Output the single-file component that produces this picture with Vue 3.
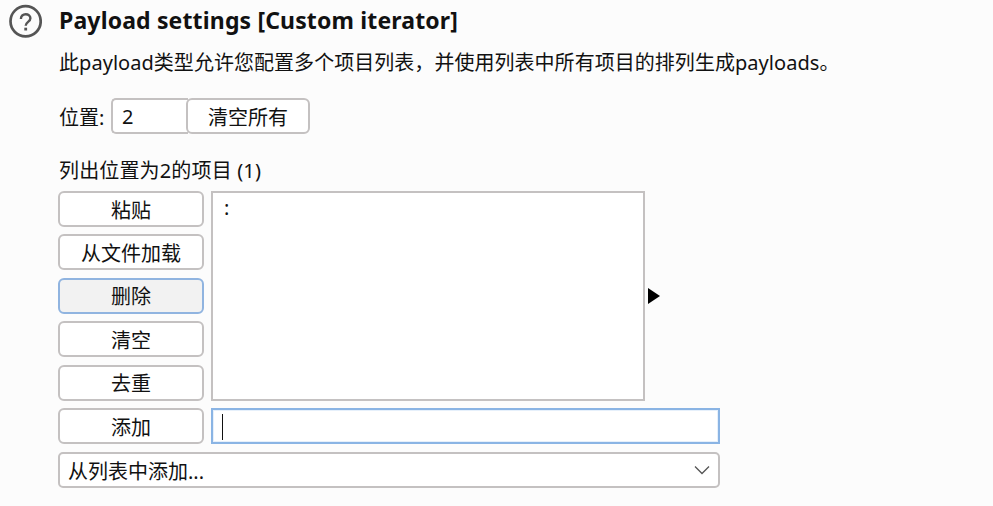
<script setup>
import { ref } from 'vue';

const listActions = ['粘贴', '从文件加载', '删除', '清空', '去重'];
const hovered = '删除';
const position = ref('2');
const newItem = ref('');
</script>

<template>
  <div class="page">
    <div class="heading">
      <svg class="help-icon" width="34" height="34" viewBox="0 0 34 34">
        <circle cx="17.6" cy="17.3" r="15.1" fill="none" stroke="#555" stroke-width="2.7" />
        <path d="M12.9 15c0-3 2.1-4.8 4.8-4.8s4.7 1.7 4.7 4.1c0 3.6-4.7 3.6-4.7 7.4" fill="none" stroke="#555" stroke-width="2.4" />
        <rect x="16.3" y="23.7" width="2.8" height="2.8" fill="#555" />
      </svg>
      <h2 class="title">Payload settings [Custom iterator]</h2>
    </div>

    <div class="body">
      <p class="desc">此payload类型允许您配置多个项目列表，并使用列表中所有项目的排列生成payloads。</p>

      <div class="position-row">
        <label class="position-label">位置:</label>
        <div class="spinner">{{ position }}</div>
        <button class="btn clear-all">清空所有</button>
      </div>

      <div class="list-label">列出位置为2的项目 (1)</div>

      <div class="list-grid">
        <div class="actions">
          <button
            v-for="action in listActions"
            :key="action"
            class="btn"
            :class="{ hover: action === hovered }"
          >
            {{ action }}
          </button>
        </div>
        <div class="list-box">:</div>
        <svg class="arrow" width="12" height="16" viewBox="0 0 12 16">
          <path d="M0 0L12 8L0 16Z" fill="#000" />
        </svg>

        <button class="btn">添加</button>
        <div class="add-input"><span class="caret"></span>{{ newItem }}</div>

        <div class="select">
          <span>从列表中添加...</span>
          <svg width="16" height="10" viewBox="0 0 16 10">
            <path d="M1 1.5L8 8.5L15 1.5" fill="none" stroke="#555" stroke-width="1.3" />
          </svg>
        </div>
      </div>
    </div>
  </div>
</template>

<style>
html,
body {
  margin: 0;
  background: #fcfcfc;
}
</style>

<style scoped>
.page {
  width: 993px;
  height: 506px;
  overflow: hidden;
  box-sizing: border-box;
  background: #fcfcfc;
  padding: 4px 0 0 8px;
  font-family: "Noto Sans", "Noto Sans CJK SC", sans-serif;
  font-size: 20px;
  color: #111;
}
.heading {
  display: flex;
  align-items: center;
  gap: 17px;
  height: 34px;
}
.help-icon {
  flex: none;
}
.title {
  margin: -2px 0 0;
  font-size: 23px;
  font-weight: 700;
  line-height: 34px;
  letter-spacing: 0.15px;
  color: #111;
}
.body {
  padding-left: 51px;
}
.desc {
  margin: 13px 0 0;
  line-height: 24px;
  letter-spacing: 0.04px;
}
.position-row {
  display: flex;
  align-items: center;
  margin-top: 23px;
  height: 36px;
}
.position-label {
  width: 53px;
}
.spinner {
  width: 77px;
  height: 36px;
  box-sizing: border-box;
  margin-left: -1px;
  border: 2px solid #c4c1c1;
  border-right: none;
  border-radius: 5px 0 0 5px;
  background: #fff;
  padding-left: 9px;
  line-height: 34px;
}
.btn {
  height: 36px;
  box-sizing: border-box;
  padding: 3px 0 0;
  border: 2px solid #c4c1c1;
  border-radius: 6px;
  background: #fff;
  font: inherit;
  line-height: 28px;
  color: #111;
}
.btn.hover {
  background: #f2f2f2;
  border-color: #90b4e0;
}
.clear-all {
  width: 124px;
  margin-left: -2px;
}
.list-label {
  margin-top: 25px;
  line-height: 24px;
  letter-spacing: 0.15px;
}
.list-grid {
  display: grid;
  grid-template-columns: 146px 434px 68px;
  column-gap: 7px;
  row-gap: 7px;
  margin-top: 8px;
  margin-left: -1px;
}
.actions {
  display: flex;
  flex-direction: column;
  gap: 7.4px;
  height: 210px;
}
.list-box {
  box-sizing: border-box;
  border: 2px solid #c4c1c1;
  background: #fff;
  padding: 3px 0 0 11px;
  line-height: 24px;
  height: 210px;
}
.arrow {
  align-self: center;
  margin-left: -4px;
}
.add-input {
  grid-column: 2 / 4;
  height: 36px;
  box-sizing: border-box;
  border: 2px solid #8ab4e4;
  box-shadow: inset 0 0 0 1px #e6f0fb;
  background: #fff;
  padding: 4px 0 0 9px;
}
.caret {
  display: block;
  width: 1px;
  height: 26px;
  background: #111;
}
.select {
  grid-column: 1 / 4;
  height: 36px;
  margin-top: 1px;
  box-sizing: border-box;
  border: 2px solid #c4c1c1;
  border-radius: 5px;
  background: #fff;
  display: flex;
  align-items: center;
  justify-content: space-between;
  padding: 0 8px 0 8px;
}
</style>
